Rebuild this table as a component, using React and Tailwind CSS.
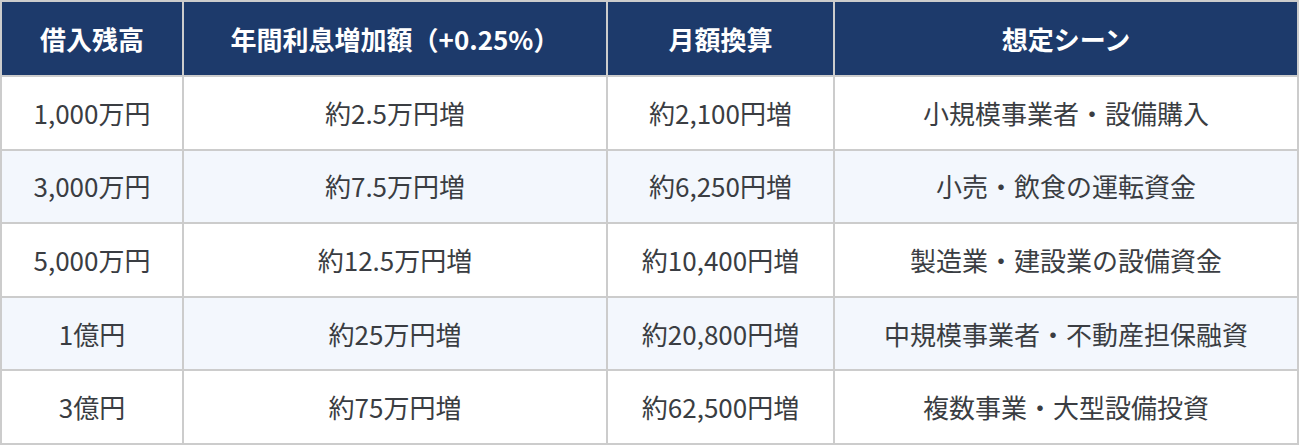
import React from "react";

const headers = ["借入残高", "年間利息増加額（+0.25%）", "月額換算", "想定シーン"];
const rows = [
  ["1,000万円", "約2.5万円増", "約2,100円増", "小規模事業者・設備購入"],
  ["3,000万円", "約7.5万円増", "約6,250円増", "小売・飲食の運転資金"],
  ["5,000万円", "約12.5万円増", "約10,400円増", "製造業・建設業の設備資金"],
  ["1億円", "約25万円増", "約20,800円増", "中規模事業者・不動産担保融資"],
  ["3億円", "約75万円増", "約62,500円増", "複数事業・大型設備投資"],
];

export default function App() {
  return (
    <div className="w-[1300px] h-[446px] bg-white">
      <div
        className="w-[1299px] grid grid-cols-[180px_422px_225px_462px] grid-rows-[73px_71.6px_71.6px_71.6px_71.6px_71.6px] gap-[2px] p-[2px] bg-[#cccccc] text-[26px] leading-[38px]"
        style={{ fontFamily: '"Noto Sans CJK JP", "Noto Sans", sans-serif' }}
      >
        {headers.map((h) => (
          <div
            key={h}
            className="bg-[#1d3a6b] text-white font-bold flex items-center justify-center"
          >
            {h}
          </div>
        ))}
        {rows.map((r, i) =>
          r.map((c, j) => (
            <div
              key={i + "-" + j}
              className={
                (i % 2 === 1 ? "bg-[#f3f7fd] " : "bg-white ") +
                "text-[#3a3d42] flex items-center justify-center"
              }
            >
              {c}
            </div>
          ))
        )}
      </div>
    </div>
  );
}
